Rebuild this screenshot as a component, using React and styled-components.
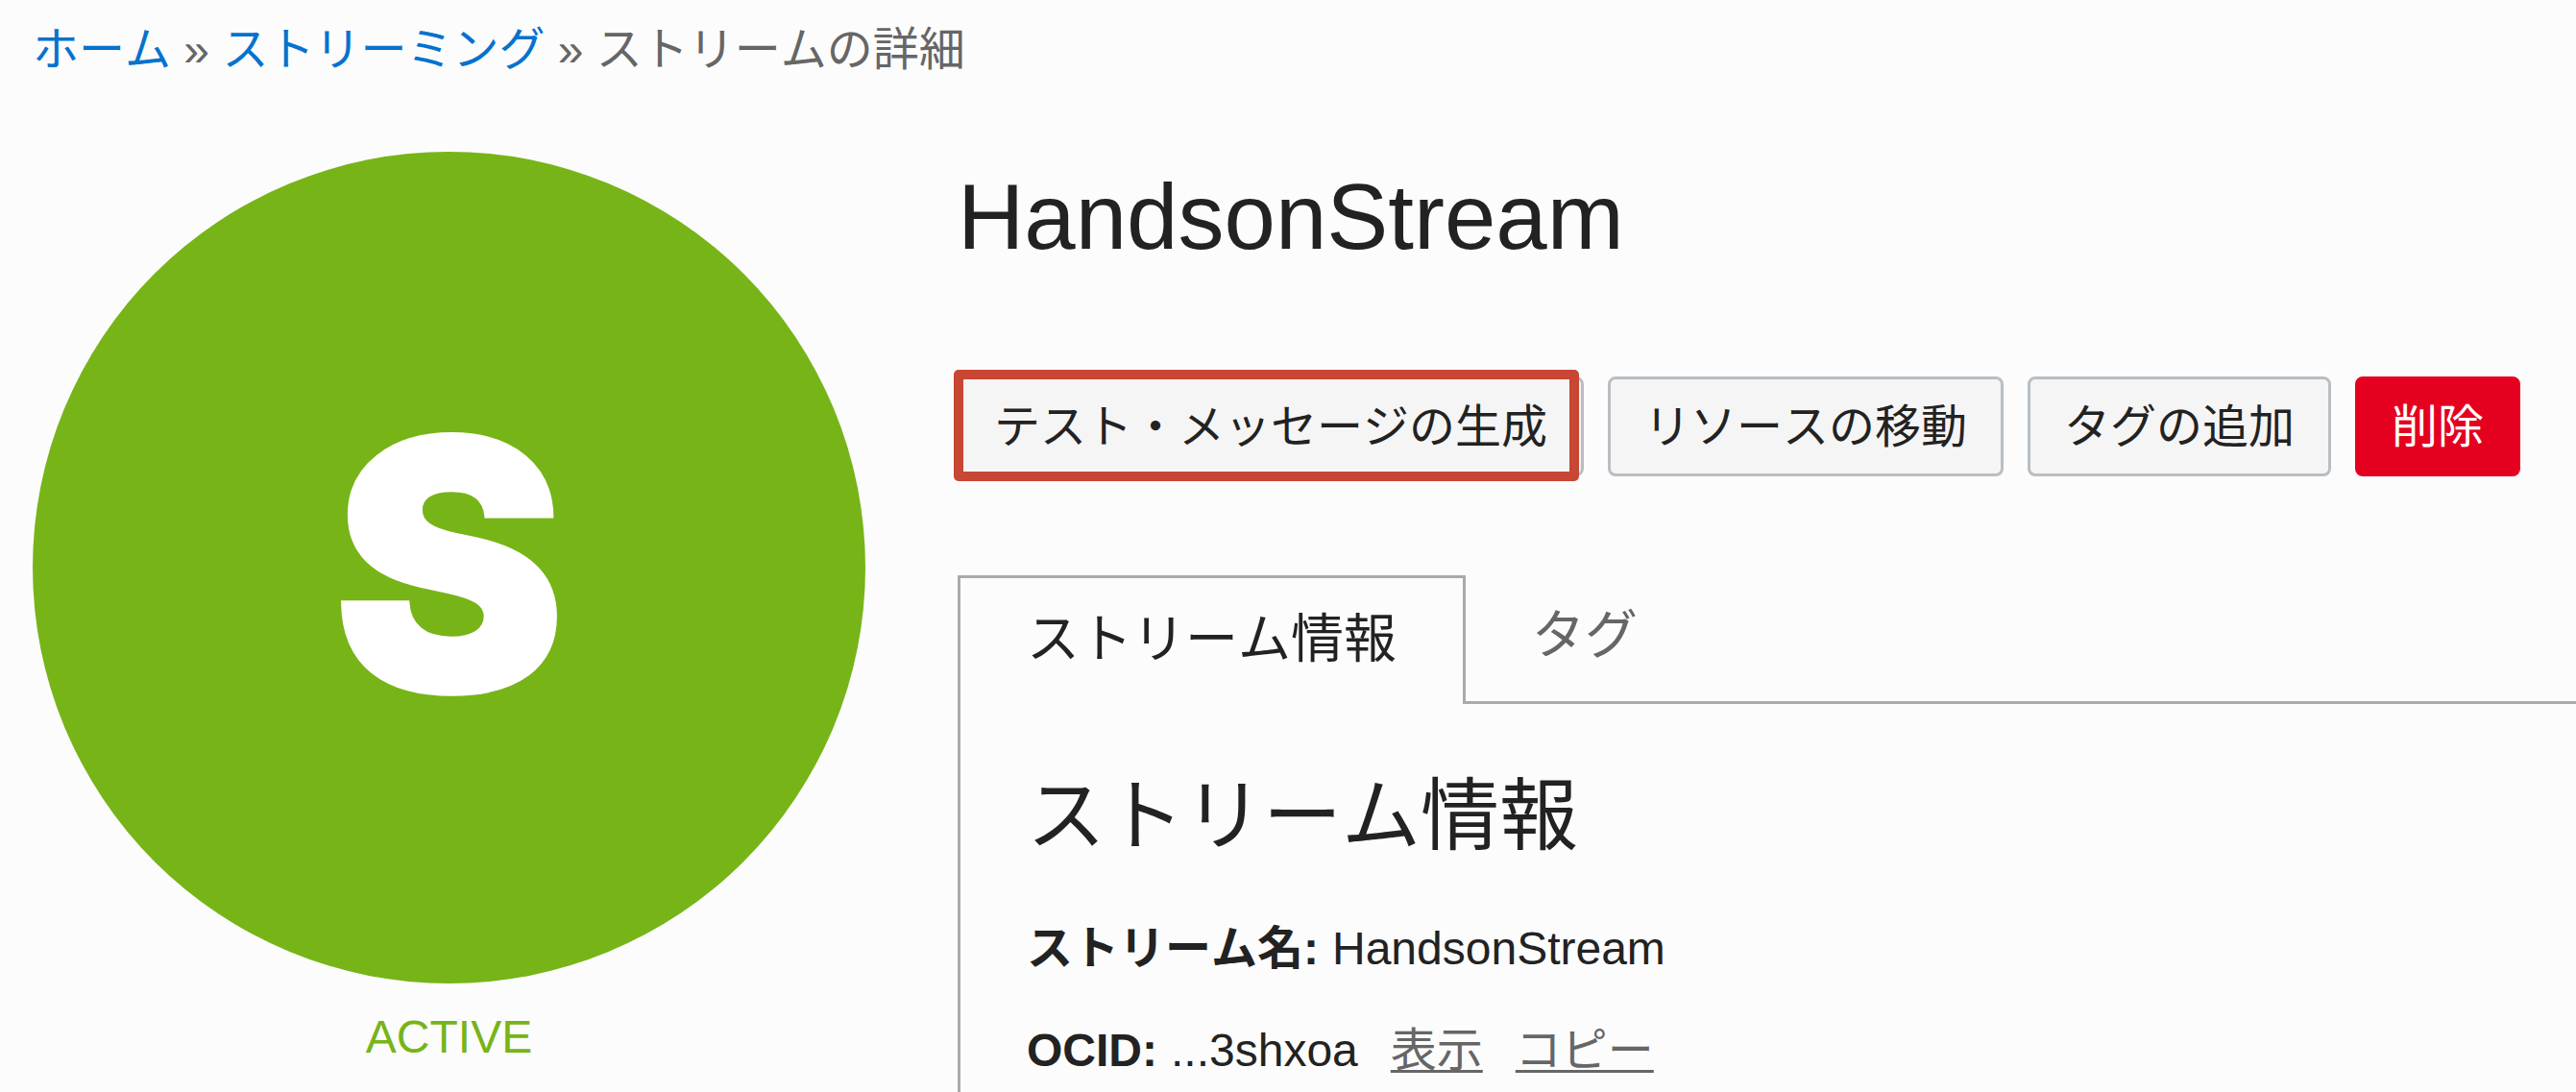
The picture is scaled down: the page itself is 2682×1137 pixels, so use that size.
import React from "react";
import styled, { createGlobalStyle, css } from "styled-components";

const GlobalStyle = createGlobalStyle`
  *, *::before, *::after { box-sizing: border-box; }
  body {
    margin: 0;
    background: #fcfcfc;
    color: #222;
    font-family: "Liberation Sans", Arial, "Noto Sans CJK JP", sans-serif;
    font-size: 48px;
    font-kerning: none;
    line-height: 60px;
  }
  h1, h2, p, dl, dd { margin: 0; font-weight: 400; }
  button { font: inherit; font-kerning: none; cursor: pointer; }
`;

const Page = styled.div`
  display: flex;
  flex-direction: column;
  min-height: 100vh;
  padding: 22px 0 0 34px;
`;

const Breadcrumb = styled.nav`
  color: #666;
  white-space: nowrap;
`;

const CrumbLink = styled.a`
  color: #0572ce;
  text-decoration: none;
`;

const Main = styled.main`
  display: flex;
  flex: 1;
  gap: 96px;
  padding-top: 76px;
`;

const Status = styled.aside`
  display: flex;
  flex: none;
  flex-direction: column;
  align-items: center;
  gap: 26px;
`;

const StatusCircle = styled.div`
  display: flex;
  align-items: center;
  justify-content: center;
  width: 867px;
  height: 866px;
  padding-bottom: 6px;
  border-radius: 50%;
  background: #77b418;
  color: #fff;
  font-family: Inter, "Liberation Sans", sans-serif;
  font-size: 364px;
  font-weight: 900;
  line-height: 1;
  -webkit-text-stroke: 3px #fff;
`;

const StatusText = styled.p`
  color: #77b418;
`;

const Details = styled.section`
  display: flex;
  flex: 1;
  flex-direction: column;
  min-width: 0;
`;

const Title = styled.h1`
  padding-top: 12px;
  font-size: 96px;
  line-height: 112px;
`;

const Actions = styled.div`
  display: flex;
  gap: 25px;
  padding: 110px 0 103px;
`;

const Highlight = styled.div`
  position: relative;
  &::after {
    content: "";
    position: absolute;
    inset: -7px 5px -5px -4px;
    border: 10px solid #c74634;
    border-radius: 5px;
    pointer-events: none;
  }
`;

const Button = styled.button`
  height: 104px;
  padding: 2px 35px 0;
  border: 3px solid #b8bec4;
  border-radius: 8px;
  background: #f5f5f5;
  color: #222;
  white-space: nowrap;
  ${(p) => p.$danger && css`
    border-color: #e5001f;
    background: #e5001f;
    color: #fff;
  `}
`;

const TabList = styled.div`
  display: flex;
`;

const Tab = styled.button`
  height: 134px;
  padding: 0 69px 8px;
  border: 0 solid #aaa;
  border-bottom-width: 3px;
  background: none;
  color: #666;
  font-size: 55px;
  white-space: nowrap;
  ${(p) => p.$active && css`
    padding-bottom: 6px;
    border-width: 3px 3px 0;
    color: #222;
  `}
`;

const TabRule = styled.div`
  flex: 1;
  border-bottom: 3px solid #aaa;
`;

const Panel = styled.div`
  flex: 1;
  padding: 66px 0 0 69px;
  border-left: 3px solid #aaa;
`;

const PanelTitle = styled.h2`
  font-size: 82px;
  line-height: 102px;
`;

const InfoList = styled.dl`
  display: flex;
  flex-direction: column;
  gap: 46px;
  padding-top: 57px;
`;

const InfoRow = styled.div`
  display: flex;
  gap: 14px;
  white-space: nowrap;
`;

const Term = styled.dt`
  font-weight: 700;
`;

const Value = styled.dd`
  display: flex;
  gap: 34px;
`;

const ValueLink = styled.a`
  color: #666;
  text-decoration: underline;
  text-decoration-thickness: 3px;
  text-underline-offset: 4px;
  text-decoration-skip-ink: none;
`;

export default function App() {
  return (
    <>
      <GlobalStyle />
      <Page>
        <Breadcrumb>
          <CrumbLink href="#home">ホーム</CrumbLink> »{" "}
          <CrumbLink href="#streaming">ストリーミング</CrumbLink> » ストリームの詳細
        </Breadcrumb>
        <Main>
          <Status>
            <StatusCircle>S</StatusCircle>
            <StatusText>ACTIVE</StatusText>
          </Status>
          <Details>
            <Title>HandsonStream</Title>
            <Actions>
              <Highlight>
                <Button type="button">テスト・メッセージの生成</Button>
              </Highlight>
              <Button type="button">リソースの移動</Button>
              <Button type="button">タグの追加</Button>
              <Button type="button" $danger>削除</Button>
            </Actions>
            <TabList role="tablist">
              <Tab type="button" role="tab" id="tab-info" aria-selected="true" aria-controls="panel-info" $active>
                ストリーム情報
              </Tab>
              <Tab type="button" role="tab" aria-selected="false">タグ</Tab>
              <TabRule />
            </TabList>
            <Panel role="tabpanel" id="panel-info" aria-labelledby="tab-info">
              <PanelTitle>ストリーム情報</PanelTitle>
              <InfoList>
                <InfoRow>
                  <Term>ストリーム名:</Term>
                  <Value>HandsonStream</Value>
                </InfoRow>
                <InfoRow>
                  <Term>OCID:</Term>
                  <Value>
                    <span>...3shxoa</span>
                    <ValueLink href="#show">表示</ValueLink>
                    <ValueLink href="#copy">コピー</ValueLink>
                  </Value>
                </InfoRow>
              </InfoList>
            </Panel>
          </Details>
        </Main>
      </Page>
    </>
  );
}
